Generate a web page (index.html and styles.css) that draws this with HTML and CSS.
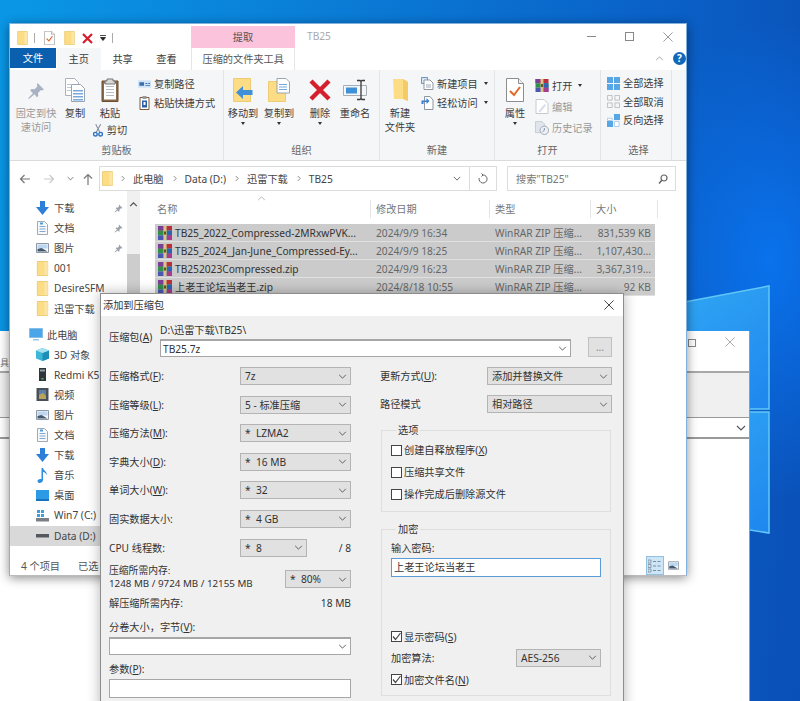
FILE: index.html
```html
<!DOCTYPE html>
<html lang="zh-CN">
<head>
  <meta charset="UTF-8">
  <title>TB25</title>
  <link rel="stylesheet" href="styles.css">
</head>
<body>
<svg class="defs" width="0" height="0" aria-hidden="true">
  <symbol id="folder" viewBox="0 0 12 16">
    <path d="M.5 .5h11v15H.5z" fill="#fcdc84" stroke="#eccb74"/>
    <path d="M8 1h3.5v14H8z" fill="#fbe6a8"/>
  </symbol>
  <symbol id="rar" viewBox="0 0 14 14">
    <path d="M0 0h14v4.6H0z" fill="#b9303a"/>
    <path d="M0 0h5v4.6H0z" fill="#7a3f96"/>
    <path d="M0 4.6h14v4.8H0z" fill="#2f8f4b"/>
    <path d="M9 4.6h5v4.8H9z" fill="#2e62b5"/>
    <path d="M0 9.4h14V14H0z" fill="#4a57b0"/>
    <path d="M9 9.4h5V14H9z" fill="#a93a8c"/>
    <path d="M5.4 0h3.2v14H5.4z" fill="#dcc28e"/>
    <path d="M6 5.5h2v3H6z" fill="#6b4a20"/>
  </symbol>
  <symbol id="doccheck" viewBox="0 0 18 24">
    <path d="M.5 .5h12l5 5v18H.5z" fill="#fff" stroke="#8d8d8d"/>
    <path d="M12.5 .5v5h5" fill="#eee" stroke="#8d8d8d"/>
    <path d="M4 13l4 4 6-8" fill="none" stroke="#e2672a" stroke-width="2"/>
  </symbol>
  <symbol id="redx" viewBox="0 0 22 22">
    <path d="M2 2l18 18M20 2L2 20" stroke="#d4202c" stroke-width="4.4"/>
  </symbol>
  <symbol id="pin" viewBox="0 0 18 18">
    <path d="M10.5 1l6.5 6.5-2 1-1-.6-3 3 .3 3-1.3 1.3-2.6-2.9L2 17l-.8-.8 4.800-5-2.800-2.700L4.500 7l3 .3 3-3-.6-1.200z" fill="#a9b2c2"/>
  </symbol>
  <symbol id="copy" viewBox="0 0 20 24">
    <path d="M.5 .5h9l4 4v13H.5z" fill="#fff" stroke="#aab1bc"/>
    <path d="M6.500 6.500h9l4 4v13h-13z" fill="#fff" stroke="#9aa3b0"/>
    <path d="M8 12h10v1.500H8zM8 15h10v1.500H8zM8 18h10v1.500H8zM8 21h10v1.500H8z" fill="#7aa7dc"/>
    <path d="M2 6h4v1H2zM2 9h4v1H2zM2 12h4v1H2z" fill="#b9c7da"/>
  </symbol>
  <symbol id="paste" viewBox="0 0 18 24">
    <path d="M1 3h16v20.500H1z" fill="#8a6a4a" stroke="#6a4c30"/>
    <path d="M3 5.500h12v16H3z" fill="#fff"/>
    <path d="M5 8h8v1H5zM5 11h8v1H5zM5 14h8v1H5zM5 17h8v1H5z" fill="#b8bcc4"/>
    <path d="M6 1h6v2h2v3H4V3h2z" fill="#d8d8d8" stroke="#777"/>
  </symbol>
  <symbol id="scissors" viewBox="0 0 11 14">
    <path d="M3 0l4.500 9M8.500 0L3.500 9" stroke="#8a93a0" stroke-width="1.200" fill="none"/>
    <circle cx="2.600" cy="11" r="2" fill="none" stroke="#2f74c4" stroke-width="1.500"/>
    <circle cx="8.400" cy="11" r="2" fill="none" stroke="#2f74c4" stroke-width="1.500"/>
  </symbol>
  <symbol id="path" viewBox="0 0 14 8">
    <path d="M0 0h14v8H0z" fill="#cfe3f7"/>
    <path d="M1.500 2h5v4h-5zM8 3h2v1H8zM11 3h2v1h-2zM8 5h5v1H8z" fill="#3e6ea8"/>
  </symbol>
  <symbol id="shortcut" viewBox="0 0 10 14">
    <path d="M.5 1.500h9v12h-9z" fill="#fff" stroke="#7a5a3a"/>
    <path d="M3 0h4v3H3z" fill="#999"/>
    <path d="M2.500 4.500h5v7h-5z" fill="#2d5ea6"/>
    <path d="M4 6h2v3H4z" fill="#fff"/>
  </symbol>
  <symbol id="moveto" viewBox="0 0 20 24">
    <path d="M.5 .5h17v23H.5z" fill="#fcdc84" stroke="#eccb74"/>
    <path d="M19.500 12H10V8L3 14.500 10 21v-4h9.500z" fill="#3f90d8"/>
  </symbol>
  <symbol id="copyto" viewBox="0 0 22 24">
    <path d="M.5 3.500h17v20H.5z" fill="#fcdc84" stroke="#eccb74"/>
    <path d="M9 .5h9l3.500 3.500v11H9z" fill="#fff" stroke="#9aa3b0"/>
    <path d="M11 6h8v1h-8zM11 8.500h8v1h-8zM11 11h8v1h-8z" fill="#7aa7dc"/>
  </symbol>
  <symbol id="rename" viewBox="0 0 24 20">
    <path d="M.5 5.500h23v10H.5z" fill="#f5f6f7" stroke="#a6adb6"/>
    <path d="M3 7.500h11v6H3z" fill="#3f90d8"/>
    <path d="M14 .5h3l1 1 1-1h3M14 19.500h3l1-1 1 1h3M18 1v18" fill="none" stroke="#3a3a3a" stroke-width="1.300"/>
  </symbol>
  <symbol id="newfolder" viewBox="0 0 15 22">
    <path d="M0 0h10l5 3v19l-5-2H1z" fill="#fcdc84"/>
    <path d="M10 0l5 3v19l-5-2z" fill="#f3cc66"/>
  </symbol>
  <symbol id="newitem" viewBox="0 0 13 13">
    <path d="M.5 .5h6v6h-6z" fill="#d9e7f6" stroke="#6a93c4"/>
    <path d="M3 3h6l3 3v6.500H3z" fill="#fff" stroke="#8d96a3"/>
    <path d="M5 7h5v4H5z" fill="#cfd4da"/>
  </symbol>
  <symbol id="easy" viewBox="0 0 12 14">
    <path d="M3 .5h5.500L11.500 4v9.500H3z" fill="#fff" stroke="#8d96a3"/>
    <path d="M0 4.500h5V2l3 3-3 3V6H2v2H0z" fill="#3a7fd0"/>
  </symbol>
  <symbol id="edit" viewBox="0 0 13 15">
    <path d="M.5 .5h8l4 4v10H.5z" fill="#fff" stroke="#c5cad1"/>
    <path d="M3 12l6-7 1.500 1.500-6 7z" fill="#d6dfea"/>
  </symbol>
  <symbol id="history" viewBox="0 0 15 15">
    <path d="M.5 .5h7l3 3v9H.5z" fill="#dfe5ec" stroke="#c5cad1"/>
    <circle cx="10" cy="10" r="4.500" fill="#eef1f5" stroke="#9aa6b4"/>
    <path d="M10 7.500V10l-2 1.500" fill="none" stroke="#7b8796"/>
  </symbol>
  <symbol id="selall" viewBox="0 0 14 14">
    <path d="M0 0h6.500v6.500H0zM7.500 0H14v6.500H7.500zM0 7.500h6.500V14H0zM7.500 7.500H14V14H7.500z" fill="#57a6e6"/>
  </symbol>
  <symbol id="selnone" viewBox="0 0 14 14">
    <path d="M.5 .5h5v5h-5zM8.500 .5h5v5h-5zM.5 8.500h5v5h-5zM8.500 8.500h5v5h-5z" fill="none" stroke="#b9bec5"/>
  </symbol>
  <symbol id="selinv" viewBox="0 0 14 14">
    <path d="M7.500 0H14v6.500H7.500zM0 7.500h6.500V14H0z" fill="#57a6e6"/>
    <path d="M.5 4.500h5v2.500h-5zM8 8h5v5.500H8z" fill="#fff" stroke="#a8c9ea"/>
  </symbol>
  <symbol id="arrowdown" viewBox="0 0 13 14">
    <path d="M4 0h5v6h4l-6.500 8L0 6h4z" fill="#2d80d8"/>
  </symbol>
  <symbol id="doc" viewBox="0 0 11 14">
    <path d="M.5 .5h7l3 3v10H.5z" fill="#f7f9fb" stroke="#9fa8b3"/>
    <path d="M2.500 5h6v1h-6zM2.500 7.500h6v1h-6zM2.500 10h6v1h-6z" fill="#7fa8d0"/>
    <path d="M3 1.500h3v2H3z" fill="#4d9bd8"/>
  </symbol>
  <symbol id="picture" viewBox="0 0 13 10">
    <path d="M.5 .5h12v9H.5z" fill="#f3f6fa" stroke="#8e98a5"/>
    <path d="M1.500 1.500h10v4h-10z" fill="#bcd6ef"/>
    <path d="M1.500 8.500V6l4-1 6 3.500z" fill="#43576d"/>
  </symbol>
  <symbol id="pinsmall" viewBox="0 0 9 9">
    <path d="M5 .5l3.500 3.500-1 .6-.6-.3-1.500 1.500.2 1.400-.7.600-1.300-1.400L1 8.500l-.5-.5 2.500-2.500-1.400-1.300.6-.7 1.400.2L5.100 2.200l-.3-.6z" fill="#9da3ab"/>
  </symbol>
  <symbol id="pc" viewBox="0 0 14 13">
    <path d="M.5 .5h13v9H.5z" fill="#4aa6e8" stroke="#88bde6"/>
    <path d="M4 11h6v1.500H4z" fill="#9cc6e8"/>
  </symbol>
  <symbol id="cube" viewBox="0 0 13 13">
    <path d="M6.500 0L13 2.500v8L6.500 13 0 10.500v-8z" fill="#3db6d8"/>
    <path d="M6.500 5L13 2.500v8L6.500 13z" fill="#1c8fb8"/>
    <path d="M6.500 0L13 2.500 6.500 5 0 2.500z" fill="#a6e2f0"/>
  </symbol>
  <symbol id="phone" viewBox="0 0 7 13">
    <path d="M0 0h7v13H0z" fill="#2f3538"/>
    <path d="M1 1.500h5v2H1z" fill="#8fa0a8"/>
    <path d="M2.500 10h2v1.500h-2z" fill="#5fb85f"/>
  </symbol>
  <symbol id="video" viewBox="0 0 12 13">
    <path d="M0 0h12v13H0z" fill="#4a5058"/>
    <path d="M2.500 2h7v9h-7z" fill="#5d7fa8"/>
    <path d="M2.500 7l4-2 3 3v3h-7z" fill="#b8a45a"/>
  </symbol>
  <symbol id="music" viewBox="0 0 10 15">
    <path d="M4 0h1.500c.5 3 4.500 3.500 3.500 7-.6-2-2-2.800-3.500-3v8c0 2-2 3-3.500 3S0 14 0 12.800 2 10.500 4 11z" fill="#2d8ee0"/>
  </symbol>
  <symbol id="desk" viewBox="0 0 13 11">
    <path d="M0 0h13v11H0z" fill="#2d9ae6"/>
    <path d="M0 9h13v2H0z" fill="#1573bf"/>
  </symbol>
  <symbol id="drivec" viewBox="0 0 13 13">
    <path d="M0 9h13v3.500H0z" fill="#7a7f86"/>
    <path d="M1 1h3v3H1zM5 1h3v3H5zM1 5h3v3H1zM5 5h3v3H5z" fill="#3aa0e0"/>
  </symbol>
  <symbol id="drived" viewBox="0 0 13 5">
    <path d="M0 1h13v3.500H0z" fill="#55595f"/>
  </symbol>
  <symbol id="viewlist" viewBox="0 0 14 14">
    <path d="M0 1h3v3H0zM0 5.500h3v3H0zM0 10h3v3H0z" fill="none" stroke="#7d8a97" stroke-width=".8"/>
    <path d="M5 2h3v1H5zM9.500 2h3v1h-3zM5 6.500h3v1H5zM9.500 6.500h3v1h-3zM5 11h3v1H5zM9.500 11h3v1h-3z" fill="#7d8a97"/>
  </symbol>
  <symbol id="chev" viewBox="0 0 10 6">
    <path d="M1 1l4 4 4-4" fill="none" stroke="#555" stroke-width="1.100"/>
  </symbol>
  <symbol id="crumb" viewBox="0 0 5 8">
    <path d="M1 1l3 3-3 3" fill="none" stroke="#777" stroke-width="1.100"/>
  </symbol>
  <symbol id="close" viewBox="0 0 12 12">
    <path d="M.5 .5l11 11M11.500 .5l-11 11" stroke="currentColor" fill="none"/>
  </symbol>
  <symbol id="tick" viewBox="0 0 11 11">
    <path d="M2 5.500l2.500 3L9.500 2" fill="none" stroke="#444" stroke-width="1.200"/>
  </symbol>
</svg>

<div class="desktop">
  <svg class="logo" width="800" height="701" viewBox="0 0 800 701" aria-hidden="true">
    <defs>
      <linearGradient id="pane" x1="0" y1="0" x2="1" y2="1">
        <stop offset="0" stop-color="#35b0f5"/>
        <stop offset="1" stop-color="#1f86ee"/>
      </linearGradient>
    </defs>
    <path d="M600 318L769 286V409H600z" fill="url(#pane)" stroke="#62c6f5" stroke-width="1.500"/>
    <path d="M600 412H769V533L600 506z" fill="url(#pane)" stroke="#62c6f5" stroke-width="1.500"/>
  </svg>

  <!-- window behind -->
  <div class="win-back">
    <div class="back-title">
      <span class="back-tab">具</span>
      <span class="back-ctl back-max"></span>
      <svg class="back-close" width="12" height="12"><use href="#close"/></svg>
    </div>
    <div class="back-ribbon"></div>
    <div class="back-combo"><svg width="10" height="6"><use href="#chev"/></svg></div>
  </div>

  <!-- explorer -->
  <div class="explorer">
    <div class="titlebar">
      <div class="qat">
        <svg class="q1" width="11" height="14"><use href="#folder"/></svg>
        <i class="qsep"></i>
        <svg class="q2" width="11" height="14"><use href="#doccheck"/></svg>
        <svg class="q3" width="11" height="14"><use href="#folder"/></svg>
        <svg class="q4" width="11" height="11"><use href="#redx"/></svg>
        <svg class="qdrop" width="6" height="6" viewBox="0 0 6 6"><path d="M0 .5h6M.5 2.500h5L3 5.500z" fill="#222" stroke="#222" stroke-width=".8"/></svg>
        <i class="qsep q5"></i>
      </div>
      <div class="tab-extract">提取</div>
      <div class="wintitle">TB25</div>
      <div class="winctl">
        <span class="ctl-min"></span>
        <span class="ctl-max"></span>
        <svg class="ctl-close" width="12" height="12"><use href="#close"/></svg>
      </div>
    </div>

    <div class="tabs">
      <div class="tab tab-file">文件</div>
      <div class="tab tab-active">主页</div>
      <div class="tab">共享</div>
      <div class="tab">查看</div>
      <div class="tab tab-tools">压缩的文件夹工具</div>
      <svg class="collapse" width="9" height="5" viewBox="0 0 10 6"><path d="M1 5l4-4 4 4" fill="none" stroke="#999"/></svg>
      <div class="help">?</div>
    </div>

    <div class="ribbon">
      <section class="group g1">
        <div class="group-body">
          <div class="big w52 off"><svg width="18" height="18" class="pinbig"><use href="#pin"/></svg><span>固定到快<br>速访问</span></div>
          <div class="big w26"><svg width="20" height="24"><use href="#copy"/></svg><span>复制</span></div>
          <div class="big w44">
            <svg width="18" height="24"><use href="#paste"/></svg><span>粘贴</span>
            <div class="cut"><svg width="10" height="13"><use href="#scissors"/></svg>剪切</div>
          </div>
          <div class="smalls">
            <div class="small"><svg width="13" height="8"><use href="#path"/></svg>复制路径</div>
            <div class="small"><svg width="13" height="14"><use href="#shortcut"/></svg>粘贴快捷方式</div>
          </div>
        </div>
        <div class="group-label">剪贴板</div>
      </section>
      <section class="group g2">
        <div class="group-body">
          <div class="big w38"><svg width="20" height="24"><use href="#moveto"/></svg><span>移动到</span><i class="caret"></i></div>
          <div class="big w34"><svg width="22" height="24"><use href="#copyto"/></svg><span>复制到</span><i class="caret"></i></div>
          <div class="big w36 ml6"><svg width="22" height="24"><use href="#redx"/></svg><span>删除</span><i class="caret"></i></div>
          <div class="big w34"><svg width="24" height="24"><use href="#rename"/></svg><span>重命名</span></div>
        </div>
        <div class="group-label">组织</div>
      </section>
      <section class="group g3">
        <div class="group-body">
          <div class="big w40"><svg width="15" height="24"><use href="#newfolder"/></svg><span>新建<br>文件夹</span></div>
          <div class="smalls tight">
            <div class="small"><svg width="13" height="13"><use href="#newitem"/></svg>新建项目<i class="caret side"></i></div>
            <div class="small"><svg width="13" height="14"><use href="#easy"/></svg>轻松访问<i class="caret side"></i></div>
          </div>
        </div>
        <div class="group-label">新建</div>
      </section>
      <section class="group g4">
        <div class="group-body">
          <div class="big w40"><svg width="18" height="24"><use href="#doccheck"/></svg><span>属性</span><i class="caret"></i></div>
          <div class="smalls wide">
            <div class="small"><svg width="14" height="13"><use href="#rar"/></svg>打开<i class="caret side"></i></div>
            <div class="small off"><svg width="14" height="15"><use href="#edit"/></svg>编辑</div>
            <div class="small off"><svg width="14" height="14"><use href="#history"/></svg>历史记录</div>
          </div>
        </div>
        <div class="group-label">打开</div>
      </section>
      <section class="group g5">
        <div class="group-body">
          <div class="smalls select">
            <div class="small"><svg width="13" height="13"><use href="#selall"/></svg>全部选择</div>
            <div class="small"><svg width="13" height="13"><use href="#selnone"/></svg>全部取消</div>
            <div class="small"><svg width="13" height="13"><use href="#selinv"/></svg>反向选择</div>
          </div>
        </div>
        <div class="group-label">选择</div>
      </section>
    </div>

    <div class="navbar">
      <div class="navbtns">
        <svg width="12" height="10" viewBox="0 0 12 10"><path d="M11 5H2M5.500 1L1.500 5l4 4" fill="none" stroke="#777" stroke-width="1.200"/></svg>
        <svg width="12" height="10" viewBox="0 0 12 10"><path d="M1 5h9M6.500 1l4 4-4 4" fill="none" stroke="#c9c9c9" stroke-width="1.200"/></svg>
        <svg width="7" height="5"><use href="#chev"/></svg>
        <svg class="nav-up" width="10" height="12" viewBox="0 0 10 12"><path d="M5 12V2M1 5.500l4-4 4 4" fill="none" stroke="#777" stroke-width="1.200"/></svg>
      </div>
      <div class="address">
        <svg width="11" height="15"><use href="#folder"/></svg>
        <svg class="crumb crumb-first" width="4" height="7"><use href="#crumb"/></svg><span>此电脑</span>
        <svg class="crumb" width="4" height="7"><use href="#crumb"/></svg><span>Data (D:)</span>
        <svg class="crumb" width="4" height="7"><use href="#crumb"/></svg><span>迅雷下载</span>
        <svg class="crumb" width="4" height="7"><use href="#crumb"/></svg><span>TB25</span>
        <svg class="addr-chev" width="8" height="5"><use href="#chev"/></svg>
        <div class="refresh">
          <svg width="10" height="11" viewBox="0 0 10 11"><path d="M5 2a4 4 0 1 1-3.800 3M5 2L3.500 .5M5 2L3.500 3.500" fill="none" stroke="#666" stroke-width="1"/></svg>
        </div>
      </div>
      <div class="search">
        <span>搜索"TB25"</span>
        <svg width="10" height="10" viewBox="0 0 10 10"><circle cx="6" cy="4" r="3" fill="none" stroke="#666" stroke-width="1.200"/><path d="M4 6L1 9.500" stroke="#666" stroke-width="1.500"/></svg>
      </div>
    </div>

    <div class="panes">
      <div class="sidebar">
        <div class="tree">
          <div class="node"><svg width="13" height="14"><use href="#arrowdown"/></svg>下载<svg class="pinned" width="9" height="9"><use href="#pinsmall"/></svg></div>
          <div class="node"><svg width="13" height="14"><use href="#doc"/></svg>文档<svg class="pinned" width="9" height="9"><use href="#pinsmall"/></svg></div>
          <div class="node"><svg width="13" height="10"><use href="#picture"/></svg>图片<svg class="pinned" width="9" height="9"><use href="#pinsmall"/></svg></div>
          <div class="node"><svg width="13" height="15"><use href="#folder"/></svg>001</div>
          <div class="node"><svg width="13" height="15"><use href="#folder"/></svg>DesireSFM</div>
          <div class="node"><svg width="13" height="15"><use href="#folder"/></svg>迅雷下载</div>
          <div class="node node-root"><svg width="14" height="13"><use href="#pc"/></svg>此电脑</div>
          <div class="node"><svg width="13" height="13"><use href="#cube"/></svg>3D 对象</div>
          <div class="node"><svg width="13" height="13"><use href="#phone"/></svg>Redmi K5</div>
          <div class="node"><svg width="13" height="13"><use href="#video"/></svg>视频</div>
          <div class="node"><svg width="13" height="10"><use href="#picture"/></svg>图片</div>
          <div class="node"><svg width="13" height="14"><use href="#doc"/></svg>文档</div>
          <div class="node"><svg width="13" height="14"><use href="#arrowdown"/></svg>下载</div>
          <div class="node"><svg width="13" height="15"><use href="#music"/></svg>音乐</div>
          <div class="node"><svg width="13" height="11"><use href="#desk"/></svg>桌面</div>
          <div class="node"><svg width="13" height="13"><use href="#drivec"/></svg>Win7 (C:)</div>
          <div class="node node-sel"><svg width="13" height="5"><use href="#drived"/></svg>Data (D:)</div>
        </div>
        <div class="scrollbar">
          <svg width="9" height="5" viewBox="0 0 10 6"><path d="M1 5l4-4 4 4" fill="none" stroke="#555" stroke-width="1.500"/></svg>
          <div class="thumb"></div>
        </div>
      </div>
      <div class="files">
        <div class="cols">
          <svg class="sort" width="9" height="5" viewBox="0 0 10 6"><path d="M1 5l4-4 4 4" fill="none" stroke="#aaa"/></svg>
          <div class="col-h col-name">名称</div>
          <div class="col-h">修改日期</div>
          <div class="col-h">类型</div>
          <div class="col-h">大小</div>
        </div>
        <div class="file">
          <div class="f-name"><svg width="14" height="14"><use href="#rar"/></svg>TB25_2022_Compressed-2MRxwPVK...</div>
          <div class="f-meta">2024/9/9 16:34</div>
          <div class="f-meta">WinRAR ZIP 压缩...</div>
          <div class="f-size">831,539 KB</div>
        </div>
        <div class="file">
          <div class="f-name"><svg width="14" height="14"><use href="#rar"/></svg>TB25_2024_Jan-June_Compressed-Ey...</div>
          <div class="f-meta">2024/9/9 18:25</div>
          <div class="f-meta">WinRAR ZIP 压缩...</div>
          <div class="f-size">1,107,430...</div>
        </div>
        <div class="file">
          <div class="f-name"><svg width="14" height="14"><use href="#rar"/></svg>TB252023Compressed.zip</div>
          <div class="f-meta">2024/9/9 16:23</div>
          <div class="f-meta">WinRAR ZIP 压缩...</div>
          <div class="f-size">3,367,319...</div>
        </div>
        <div class="file">
          <div class="f-name"><svg width="14" height="14"><use href="#rar"/></svg>上老王论坛当老王.zip</div>
          <div class="f-meta">2024/8/18 10:55</div>
          <div class="f-meta">WinRAR ZIP 压缩...</div>
          <div class="f-size">92 KB</div>
        </div>
      </div>
    </div>

    <div class="statusbar">
      <span class="st-count">4 个项目</span>
      <span class="st-sel">已选</span>
      <div class="views">
        <div class="view view-on"><svg width="14" height="14"><use href="#viewlist"/></svg></div>
        <div class="view"><svg width="11" height="9"><use href="#picture"/></svg></div>
      </div>
    </div>
  </div>

  <!-- rar dialog -->
  <div class="dialog">
    <div class="dlg-title">
      <span>添加到压缩包</span>
      <svg width="10" height="10"><use href="#close"/></svg>
    </div>
    <div class="dlg-body">
      <div class="archive">
        <label class="archive-label">压缩包(<u>A</u>)</label>
        <div class="archive-main">
          <div class="archive-path">D:\迅雷下载\TB25\</div>
          <div class="archive-line">
            <div class="combo white archive-input">TB25.7z<svg width="9" height="5"><use href="#chev"/></svg></div>
            <div class="browse">...</div>
          </div>
        </div>
      </div>

      <div class="dlg-cols">
        <div class="dlg-left">
          <div class="field"><label>压缩格式(<u>F</u>):</label><div class="combo w111">7z<svg width="9" height="5"><use href="#chev"/></svg></div></div>
          <div class="field"><label>压缩等级(<u>L</u>):</label><div class="combo w111">5 - 标准压缩<svg width="9" height="5"><use href="#chev"/></svg></div></div>
          <div class="field"><label>压缩方法(<u>M</u>):</label><div class="combo w111">* &nbsp;LZMA2<svg width="9" height="5"><use href="#chev"/></svg></div></div>
          <div class="field"><label>字典大小(<u>D</u>):</label><div class="combo w111">* &nbsp;16 MB<svg width="9" height="5"><use href="#chev"/></svg></div></div>
          <div class="field"><label>单词大小(<u>W</u>):</label><div class="combo w111">* &nbsp;32<svg width="9" height="5"><use href="#chev"/></svg></div></div>
          <div class="field"><label>固实数据大小:</label><div class="combo w111">* &nbsp;4 GB<svg width="9" height="5"><use href="#chev"/></svg></div></div>
          <div class="field field-cpu"><label>CPU 线程数:</label><div class="combo w67">* &nbsp;8<svg width="9" height="5"><use href="#chev"/></svg></div><span class="cpu-max">/ 8</span></div>
          <div class="memory">
            <div class="mem-text"><div>压缩所需内存:</div><div>1248 MB / 9724 MB / 12155 MB</div></div>
            <div class="combo w66">* &nbsp;80%<svg width="9" height="5"><use href="#chev"/></svg></div>
          </div>
          <div class="unpack"><span>解压缩所需内存:</span><span>18 MB</span></div>
          <div class="stack-label split-label">分卷大小，字节(<u>V</u>):</div>
          <div class="combo white full">&nbsp;<svg width="9" height="5"><use href="#chev"/></svg></div>
          <div class="stack-label param-label">参数(<u>P</u>):</div>
          <div class="text-input full param-input"></div>
        </div>

        <div class="dlg-right">
          <div class="field field-r"><label>更新方式(<u>U</u>):</label><div class="combo w125">添加并替换文件<svg width="9" height="5"><use href="#chev"/></svg></div></div>
          <div class="field field-r"><label>路径模式</label><div class="combo w125">相对路径<svg width="9" height="5"><use href="#chev"/></svg></div></div>

          <fieldset class="box box-options">
            <legend>选项</legend>
            <div class="check"><i class="cb"></i>创建自释放程序(<u>X</u>)</div>
            <div class="check"><i class="cb"></i>压缩共享文件</div>
            <div class="check"><i class="cb"></i>操作完成后删除源文件</div>
          </fieldset>

          <fieldset class="box box-crypt">
            <legend>加密</legend>
            <div class="pass-label">输入密码:</div>
            <div class="text-input pass-input">上老王论坛当老王</div>
            <div class="check-s show-pass"><i class="cb"><svg width="11" height="11"><use href="#tick"/></svg></i>显示密码(<u>S</u>)</div>
            <div class="algo"><span>加密算法:</span><div class="combo w85">AES-256<svg width="9" height="5"><use href="#chev"/></svg></div></div>
            <div class="check-s enc-names"><i class="cb"><svg width="11" height="11"><use href="#tick"/></svg></i>加密文件名(<u>N</u>)</div>
          </fieldset>
        </div>
      </div>
    </div>
  </div>
</div>
</body>
</html>
```

FILE: styles.css
```css
* {
  box-sizing: border-box;
}
html, body {
  margin: 0;
  height: 100%;
  overflow: hidden;
}
body {
  font-family: "Noto Sans", "Noto Sans CJK SC", sans-serif;
  font-size: 10.2px;
  line-height: 14px;
  color: #3c3c3c;
}
i {
  font-style: normal;
}
u {
  text-underline-offset: 1px;
}
svg {
  flex-shrink: 0;
  display: block;
}
.defs {
  position: absolute;
}

.desktop {
  position: relative;
  width: 800px;
  height: 701px;
  overflow: hidden;
  background:
    radial-gradient(ellipse 150px 240px at 770px 260px, #0a72ec, rgba(10,114,236,0)),
    linear-gradient(95deg, #0a97e6 0%, #0a7fd8 35%, #0a62c8 75%, #0a50b8 100%);
}
.logo {
  position: absolute;
  left: 0;
  top: 0;
}

/* window behind */
.win-back {
  position: absolute;
  left: -20px;
  top: 331px;
  width: 770px;
  height: 380px;
  background: #fff;
  border-right: 1px solid #9a9a9a;
}
.back-title {
  height: 42px;
  display: flex;
  align-items: flex-start;
  border-bottom: 2px solid #a8a8a8;
  color: #777;
}
.back-tab {
  width: 30px;
  margin: 25px 0 0 20px;
  font-size: 9px;
}
.back-max {
  width: 8px;
  height: 8px;
  margin: 8px 0 0 658px;
  border: 1px solid #888;
}
.back-close {
  margin: 6px 0 0 29px;
  width: 10px;
  height: 10px;
  color: #999;
}
.back-ribbon {
  height: 45px;
  background: #f0f0f0;
  border-bottom: 1px solid #999;
}
.back-combo {
  height: 21px;
  display: flex;
  justify-content: flex-end;
  align-items: center;
  padding-right: 3px;
  border-bottom: 2px solid #999;
}

/* explorer */
.explorer {
  position: absolute;
  left: 9px;
  top: 23px;
  width: 678px;
  height: 553px;
  background: #fff;
  border: 1px solid #7fb0de;
  border-bottom-color: #bbb;
  box-shadow: 0 2px 10px rgba(0,0,0,0.45);
  display: flex;
  flex-direction: column;
}
.titlebar {
  height: 24px;
  display: flex;
}
.qat {
  width: 181px;
  display: flex;
  align-items: center;
  padding-left: 7px;
  padding-top: 4px;
}
.qsep {
  width: 1px;
  height: 10px;
  background: #aaa;
  margin-left: 6px;
}
.q2 { margin-left: 9px; }
.q3 { margin-left: 9px; }
.q4 { margin-left: 7px; }
.qdrop { margin-left: 7px; }
.q5 { margin-left: 6px; }
.tab-extract {
  width: 104px;
  height: 22px;
  margin-top: 2px;
  background: #fbc3dc;
  text-align: center;
  line-height: 22px;
  color: #555;
}
.wintitle {
  margin: 4px 0 0 12px;
  line-height: 16px;
  color: #aaa;
}
.winctl {
  margin-left: auto;
  display: flex;
  align-items: center;
  padding-right: 13px;
  padding-top: 1px;
}
.ctl-min {
  width: 9px;
  height: 1px;
  background: #888;
}
.ctl-max {
  width: 9px;
  height: 9px;
  margin-left: 29px;
  border: 1px solid #888;
}
.ctl-close {
  width: 10px;
  height: 10px;
  margin-left: 29px;
  color: #888;
}

.tabs {
  height: 22px;
  display: flex;
  align-items: flex-start;
}
.tab {
  width: 44px;
  height: 22px;
  line-height: 22px;
  text-align: center;
}
.tab-file {
  width: 46px;
  height: 20px;
  margin-right: 1px;
  background: #0a5fae;
  color: #fff;
  line-height: 20px;
}
.tab-active {
  background: #f5f6f7;
}
.tab-tools {
  width: 104px;
  margin-left: 3px;
  border-left: 1px solid #e6e6e6;
  border-right: 1px solid #e6e6e6;
  color: #555;
}
.collapse {
  margin: 8px 0 0 360px;
}
.help {
  width: 13px;
  height: 13px;
  margin: 4px 0 0 9px;
  border-radius: 50%;
  background: #1268b8;
  color: #fff;
  font-size: 10px;
  font-weight: 700;
  line-height: 13px;
  text-align: center;
}

.ribbon {
  height: 91px;
  flex-shrink: 0;
  display: flex;
  background: #f5f6f7;
  border-bottom: 1px solid #dadbdc;
}
.group {
  height: 90px;
  display: flex;
  flex-direction: column;
  justify-content: space-between;
  border-right: 1px solid #e2e4e7;
}
.g1 { width: 214px; }
.g2 { width: 156px; }
.g3 { width: 115px; }
.g4 { width: 106px; }
.g5 { width: 71px; padding-left: 5px; }
.group-body {
  display: flex;
  height: 72px;
}
.group-label {
  height: 18px;
  text-align: center;
  color: #666;
  line-height: 16px;
}
.big {
  display: flex;
  flex-direction: column;
  align-items: center;
  padding-top: 8px;
  text-align: center;
  white-space: nowrap;
}
.big > span {
  margin-top: 4px;
}
.pinbig {
  margin: 4px 0 2px;
}
.w52 { width: 52px; }
.w26 { width: 26px; }
.w44 { width: 44px; }
.w38 { width: 38px; }
.w34 { width: 34px; }
.w36 { width: 36px; }
.w40 { width: 40px; }
.ml6 { margin-left: 6px; }
.off {
  color: #999;
}
.caret {
  width: 0;
  height: 0;
  margin-top: 2px;
  border-top: 3px solid #333;
  border-left: 2.5px solid transparent;
  border-right: 2.5px solid transparent;
}
.caret.side {
  margin: 0 0 0 6px;
}
.cut {
  display: flex;
  align-items: center;
  gap: 4px;
  margin-top: 3px;
}
.smalls {
  margin-left: 6px;
  padding-top: 4px;
}
.smalls.tight {
  margin-left: 1px;
}
.smalls.wide {
  margin-left: 0;
  padding-top: 5px;
}
.smalls.select {
  margin-left: 1px;
}
.small {
  height: 19px;
  display: flex;
  align-items: center;
  white-space: nowrap;
}
.small svg {
  margin-right: 3px;
}
.wide .small {
  height: 21px;
}
.select .small {
  height: 18.500px;
}

.navbar {
  height: 25px;
  margin-top: 5px;
  flex-shrink: 0;
  display: flex;
}
.navbtns {
  width: 89px;
  display: flex;
  align-items: center;
  gap: 12px;
  padding-left: 9px;
}
.nav-up {
  margin-left: -3px;
}
.address {
  width: 398px;
  display: flex;
  align-items: center;
  padding-left: 2px;
  border: 1px solid #dcdcdc;
  color: #444;
}
.crumb {
  margin: 0 8px 0 9px;
}
.crumb-first {
  margin-left: 8px;
}
.addr-chev {
  margin-left: auto;
}
.refresh {
  width: 27px;
  height: 100%;
  margin-left: 8px;
  border-left: 1px solid #dcdcdc;
  display: flex;
  align-items: center;
  justify-content: center;
}
.search {
  width: 169px;
  margin-left: 10px;
  display: flex;
  align-items: center;
  justify-content: space-between;
  padding: 0 7px 0 8px;
  border: 1px solid #dcdcdc;
  color: #777;
}

.panes {
  flex: 1;
  display: flex;
  min-height: 0;
}
.sidebar {
  width: 130px;
  display: flex;
}
.tree {
  width: 117px;
  padding-top: 7px;
}
.node {
  height: 20.100px;
  display: flex;
  align-items: center;
  padding-left: 26px;
  white-space: nowrap;
  color: #444;
}
.node svg:first-child {
  margin-right: 5px;
}
.node-root {
  margin-top: 6px;
  padding-left: 19px;
}
.node-root svg:first-child {
  margin-right: 4px;
}
.node-sel {
  background: #d9d9d9;
  width: 100px;
}
.pinned {
  margin-left: auto;
  margin-right: 4px;
}
.scrollbar {
  width: 13px;
  background: #f0f0f0;
  padding-top: 11px;
  display: flex;
  flex-direction: column;
  align-items: center;
}
.thumb {
  width: 100%;
  height: 200px;
  margin-top: 47px;
  background: #cdcdcd;
}

.files {
  flex: 1;
  padding: 9px 0 0 15px;
  position: relative;
}
.cols {
  display: grid;
  grid-template-columns: 216px 119px 101px 67px;
  height: 18px;
  margin-bottom: 6px;
}
.col-h {
  border-right: 1px solid #e5e5e5;
  padding-left: 5px;
  color: #777;
  line-height: 18px;
}
.col-name {
  padding-left: 2px;
}
.sort {
  position: absolute;
  left: 117px;
  top: 5px;
}
.file {
  display: grid;
  grid-template-columns: 216px 119px 101px 64px;
  width: 500px;
  height: 18px;
  background: #cbcbcb;
  border-bottom: 1px solid #e0e0e0;
  line-height: 18px;
  white-space: nowrap;
}
.f-name {
  display: flex;
  align-items: center;
  gap: 3px;
  padding-left: 3px;
  color: #333;
}
.f-meta {
  padding-left: 5px;
  color: #666;
}
.f-size {
  padding-right: 4px;
  text-align: right;
  color: #666;
}

.statusbar {
  height: 19px;
  flex-shrink: 0;
  display: flex;
  align-items: center;
  padding-left: 11px;
  color: #555;
}
.st-sel {
  margin-left: 18px;
}
.views {
  margin-left: auto;
  margin-right: 7px;
  display: flex;
  align-items: center;
  gap: 3px;
}
.view {
  width: 18px;
  height: 19px;
  display: flex;
  align-items: center;
  justify-content: center;
}
.view + .view {
  width: 12px;
}
.view-on {
  background: #cde6f7;
  border: 1px solid #92c0e0;
}

/* dialog */
.dialog {
  position: absolute;
  left: 100px;
  top: 293px;
  width: 524px;
  height: 420px;
  background: #f0f0f0;
  border: 1px solid #8d8d8d;
  box-shadow: 0 0 12px rgba(0,0,0,0.3);
  color: #333;
}
.dlg-title {
  height: 22px;
  background: #fff;
  display: flex;
  align-items: center;
  justify-content: space-between;
  padding: 0 9px 0 2px;
}
.dlg-title svg {
  color: #222;
}
.dlg-body {
  padding: 8px 11px 0 8px;
}
.archive {
  display: flex;
  height: 33px;
}
.archive-label {
  width: 51px;
  padding-top: 6px;
}
.archive-main {
  flex: 1;
}
.archive-path {
  height: 13px;
  line-height: 13px;
}
.archive-line {
  display: flex;
  align-items: flex-end;
  justify-content: space-between;
  height: 20px;
}
.archive-input {
  width: 411px;
}
.browse {
  width: 24px;
  height: 20px;
  background: #e1e1e1;
  border: 1px solid #c0c0c0;
  text-align: center;
  line-height: 18px;
  color: #888;
}
.dlg-cols {
  display: flex;
  margin-top: 10px;
}
.dlg-left {
  width: 242px;
}
.dlg-right {
  width: 232px;
  margin-left: 29px;
}
.combo {
  height: 18px;
  display: flex;
  align-items: center;
  justify-content: space-between;
  padding: 0 3px 0 4px;
  background: #e1e1e1;
  border: 1px solid #b4b4b4;
  white-space: nowrap;
}
.combo.white {
  background: #fff;
  border-color: #a6a6a6;
  border-top-width: 2px;
  padding-left: 2px;
}
.w111 { width: 111px; }
.w67 { width: 67px; }
.w66 { width: 66px; }
.w125 { width: 125px; }
.w85 { width: 85px; }
.field {
  height: 18px;
  margin-bottom: 10.600px;
  display: flex;
  align-items: center;
  justify-content: space-between;
}
.field-cpu {
  margin-bottom: 7px;
  justify-content: flex-start;
}
.field-cpu label {
  width: 131px;
}
.cpu-max {
  margin-left: auto;
}
.field-r {
  margin-bottom: 10px;
}
.memory {
  height: 27px;
  display: flex;
  justify-content: space-between;
}
.mem-text {
  line-height: 13.500px;
  font-size: 9.800px;
}
.memory .combo {
  margin-top: 6.500px;
}
.unpack {
  display: flex;
  justify-content: space-between;
  margin-top: 5.400px;
}
.stack-label {
  line-height: 14px;
}
.split-label {
  margin-top: 10px;
  margin-bottom: 3px;
}
.param-label {
  margin-top: 7px;
  margin-bottom: 3px;
}
.full {
  width: 100%;
}
.text-input {
  height: 19px;
  background: #fff;
  border: 1px solid #a6a6a6;
  padding-left: 2px;
  line-height: 17px;
}
.box {
  margin: 7px 0 0 1px;
  width: 230px;
  padding: 2px 9px 6px;
  border: 1px solid #dedede;
  min-inline-size: 0;
}
.box-crypt {
  margin-top: 10px;
  padding-top: 6px;
  padding-bottom: 8px;
}
.box legend {
  margin-left: 5px;
  padding: 0 2px;
  line-height: 14px;
}
.check {
  height: 22px;
  display: flex;
  align-items: center;
  white-space: nowrap;
}
.check-s {
  height: 14px;
  display: flex;
  align-items: center;
}
.cb {
  width: 11px;
  height: 11px;
  margin-right: 2px;
  background: #fff;
  border: 1px solid #444;
  flex-shrink: 0;
}
.cb svg {
  margin: -1px;
}
.pass-label {
  height: 13px;
  line-height: 13px;
}
.pass-input {
  width: 210px;
  margin-top: 2.500px;
  border-color: #5b9bd8;
}
.show-pass {
  margin-top: 53px;
}
.algo {
  display: flex;
  align-items: center;
  justify-content: space-between;
  width: 210px;
  margin-top: 5px;
}
.enc-names {
  margin-top: 6px;
}
```
